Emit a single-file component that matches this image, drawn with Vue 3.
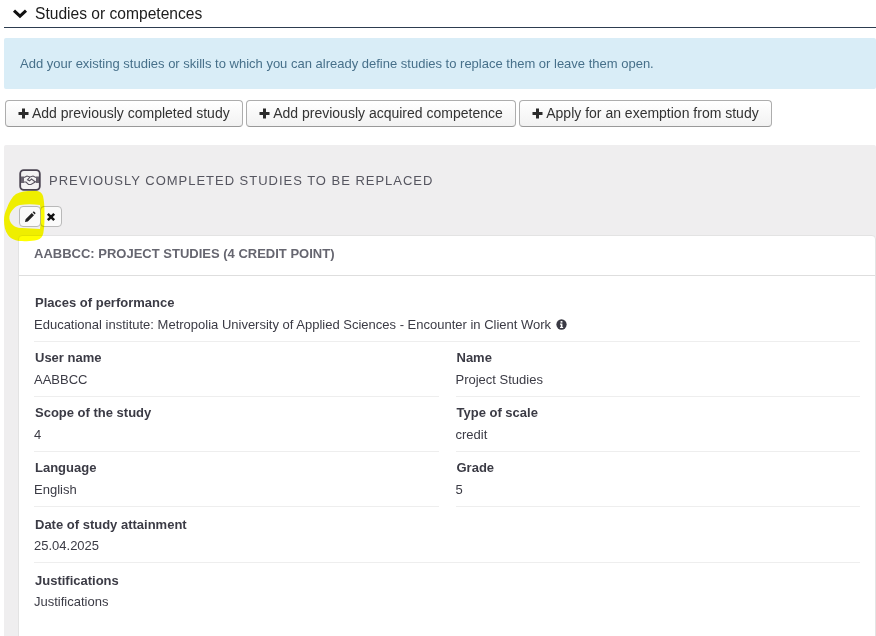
<template>
  <div class="page">
    <div class="section-head">
      <svg class="chevron" viewBox="0 0 16 10" width="16" height="10">
        <path d="M2 1.6 L8 7.2 L14 1.6" fill="none" stroke="#111" stroke-width="3" />
      </svg>
      <span>Studies or competences</span>
    </div>

    <div class="notice">
      Add your existing studies or skills to which you can already define studies to replace them or leave them open.
    </div>

    <div class="actions">
      <button v-for="label in actions" :key="label" class="btn">
        <svg class="plus" viewBox="0 0 11 11" width="11" height="11">
          <path d="M4 0.5 H7 V4 H10.5 V7 H7 V10.5 H4 V7 H0.5 V4 H4 Z" fill="#2b2b2b" />
        </svg>{{ label }}
      </button>
    </div>

    <div class="panel">
      <div class="panel-title">
        <svg class="shake" viewBox="0 0 22 22" width="22" height="22">
          <rect x="1.2" y="1.2" width="19.6" height="19.6" rx="3.5" fill="#f4f2f3" stroke="#4b4452" stroke-width="1.8" />
          <path d="M2 7.5 H5 V14 H2 Z M17 7.5 H20 V14 H17 Z" fill="#6a6470" />
          <path d="M5 8.5 L8 7 L11 8 L14 7 L17 8.5 M5 13 L7 13 L9.5 15.5 L12 15.5 L17 12.5 M11 8 L8.5 10.8 L10.5 11.8 L12.5 10 L16 12.8" fill="none" stroke="#5a5460" stroke-width="1.1" />
        </svg>
        <span>PREVIOUSLY COMPLETED STUDIES TO BE REPLACED</span>
      </div>

      <div class="tools">
        <button class="tool">
          <svg viewBox="0 0 12 12" width="12" height="12">
            <path d="M1 11 L1.6 8.2 L7.8 2 L10 4.2 L3.8 10.4 Z M8.6 1.2 L9.4 0.6 Q9.9 0.3 10.3 0.7 L11.3 1.7 Q11.7 2.1 11.4 2.6 L10.8 3.4 Z" fill="#222" />
          </svg>
        </button>
        <button class="tool">
          <svg viewBox="0 0 12 12" width="10" height="10">
            <path d="M2.2 2.2 L9.8 9.8 M9.8 2.2 L2.2 9.8" stroke="#111" stroke-width="3" />
          </svg>
        </button>
      </div>

      <div class="card">
        <div class="card-head">AABBCC: PROJECT STUDIES (4 CREDIT POINT)</div>
        <div class="card-body">
          <div class="field">
            <div class="label">Places of performance</div>
            <div class="value">
              Educational institute: Metropolia University of Applied Sciences - Encounter in Client Work
              <svg class="info" viewBox="0 0 12 12" width="11" height="11">
                <circle cx="6" cy="6" r="5.6" fill="#3a3a44" />
                <rect x="5" y="2.2" width="2" height="1.8" fill="#fff" />
                <path d="M4.4 5 H7 V8.6 H7.8 V9.8 H4.4 V8.6 H5.2 V6.2 H4.4 Z" fill="#fff" />
              </svg>
            </div>
          </div>

          <div class="grid">
            <div v-for="f in fields" :key="f.label" class="cell">
              <div class="label">{{ f.label }}</div>
              <div class="value">{{ f.value }}</div>
            </div>
          </div>

          <div class="field wide">
            <div class="label">Date of study attainment</div>
            <div class="value">25.04.2025</div>
          </div>
          <div class="field wide last">
            <div class="label">Justifications</div>
            <div class="value">Justifications</div>
          </div>
        </div>
      </div>
    </div>

    <!-- yellow marker ring drawn over the edit button -->
    <svg class="marker" viewBox="0 190 50 55" width="50" height="55">
      <path
        fill-rule="evenodd"
        fill="#ffff00"
        d="M37 191 C30 190.5 22 191 16 194 C12 197 9 202 7 208 C5 212 4 216 4 220 C4 226 5 231 8 235 C11 239 16 241 22 241 C28 241.5 33 241 37 240 C41 239 43 236 43.5 232 C44.5 226 44.5 220 44.5 214 C44.5 206 44 200 43 196 C42 193 40 191.5 37 191 Z
           M40 205 C33 204 26 204 20 205 C15 206 12 210 10 214 C9 217 9 220 11 223 C13 226 17 228 22 228 L40 229 C41 222 41 212 40 205 Z"
      />
    </svg>
  </div>
</template>

<script setup>
const actions = [
  'Add previously completed study',
  'Add previously acquired competence',
  'Apply for an exemption from study',
]

const fields = [
  { label: 'User name', value: 'AABBCC' },
  { label: 'Name', value: 'Project Studies' },
  { label: 'Scope of the study', value: '4' },
  { label: 'Type of scale', value: 'credit' },
  { label: 'Language', value: 'English' },
  { label: 'Grade', value: '5' },
]
</script>

<style>
html, body {
  margin: 0;
  background: #fff;
  overflow: hidden;
}
</style>

<style scoped>
.page {
  position: relative;
  height: 636px;
  overflow: hidden;
  font-family: "Liberation Sans", Arial, sans-serif;
  font-size: 13px;
  color: #3b3b45;
}
.section-head {
  display: flex;
  align-items: center;
  gap: 7px;
  height: 28px;
  padding-top: 1px;
  box-sizing: border-box;
  margin-left: 4px;
  padding-left: 8px;
  border-bottom: 1px solid #2d3d50;
  font-size: 15.6px;
  color: #1c1c1c;
}
.notice {
  margin: 10px 0 0 4px;
  height: 51px;
  line-height: 51px;
  padding-left: 16px;
  background: #d9edf7;
  border-radius: 2px;
  color: #47708a;
}
.actions {
  display: flex;
  gap: 3.5px;
  margin: 11px 0 0 5px;
}
.btn {
  height: 27px;
  padding: 0 12px 2px 12px;
  border: 1px solid #adadad;
  border-bottom-color: #999;
  border-radius: 4px;
  background: linear-gradient(#fff, #f2f2f2);
  font: 14px "Liberation Sans", Arial, sans-serif;
  color: #333;
  white-space: nowrap;
}
.plus {
  margin-right: 3px;
  vertical-align: -1px;
}
.panel {
  margin: 18px 0 0 4px;
  padding: 0 0 0 14px;
  height: 500px;
  background: #efeeef;
  border-radius: 2px;
}
.panel-title {
  display: flex;
  align-items: center;
  gap: 8px;
  padding: 24px 0 0 1px;
  height: 22px;
  font-size: 13px;
  letter-spacing: 0.98px;
  color: #55555f;
}
.tools {
  display: flex;
  margin: 15px 0 0 1px;
  height: 21px;
}
.marker {
  position: absolute;
  left: 0;
  top: 190px;
  mix-blend-mode: multiply;
}
.tool {
  display: flex;
  align-items: center;
  justify-content: center;
  width: 22px;
  height: 21px;
  padding: 0;
  background: #fafafa;
  border: 1px solid #b9b9b9;
  border-radius: 4px;
}
.tool + .tool {
  margin-left: -1px;
}
.card {
  margin-top: 8px;
  background: #fff;
  border: 1px solid #e3e3e3;
  border-radius: 4px 4px 0 0;
  height: 420px;
}
.card-head {
  padding: 9px 15px 12px;
  height: 18px;
  line-height: 18px;
  border-bottom: 1px solid #dedede;
  font-weight: bold;
  color: #666670;
}
.card-body {
  padding: 19px 15px 0;
}
.label {
  font-weight: bold;
  line-height: 16px;
  padding-left: 1px;
}
.value {
  margin-top: 6px;
  line-height: 15px;
}
.field {
  padding-bottom: 9px;
  border-bottom: 1px solid #eee;
  margin-bottom: 8px;
}
.field.wide {
  padding-top: 2px;
}
.field.wide .value {
  margin-top: 5px;
}
.field.last {
  border-bottom: 0;
}
.info {
  vertical-align: -1px;
  margin-left: 1px;
}
.grid {
  display: grid;
  grid-template-columns: 1fr 1fr;
  column-gap: 17px;
}
.cell {
  padding-bottom: 9px;
  border-bottom: 1px solid #eee;
  margin-bottom: 8px;
}
</style>
